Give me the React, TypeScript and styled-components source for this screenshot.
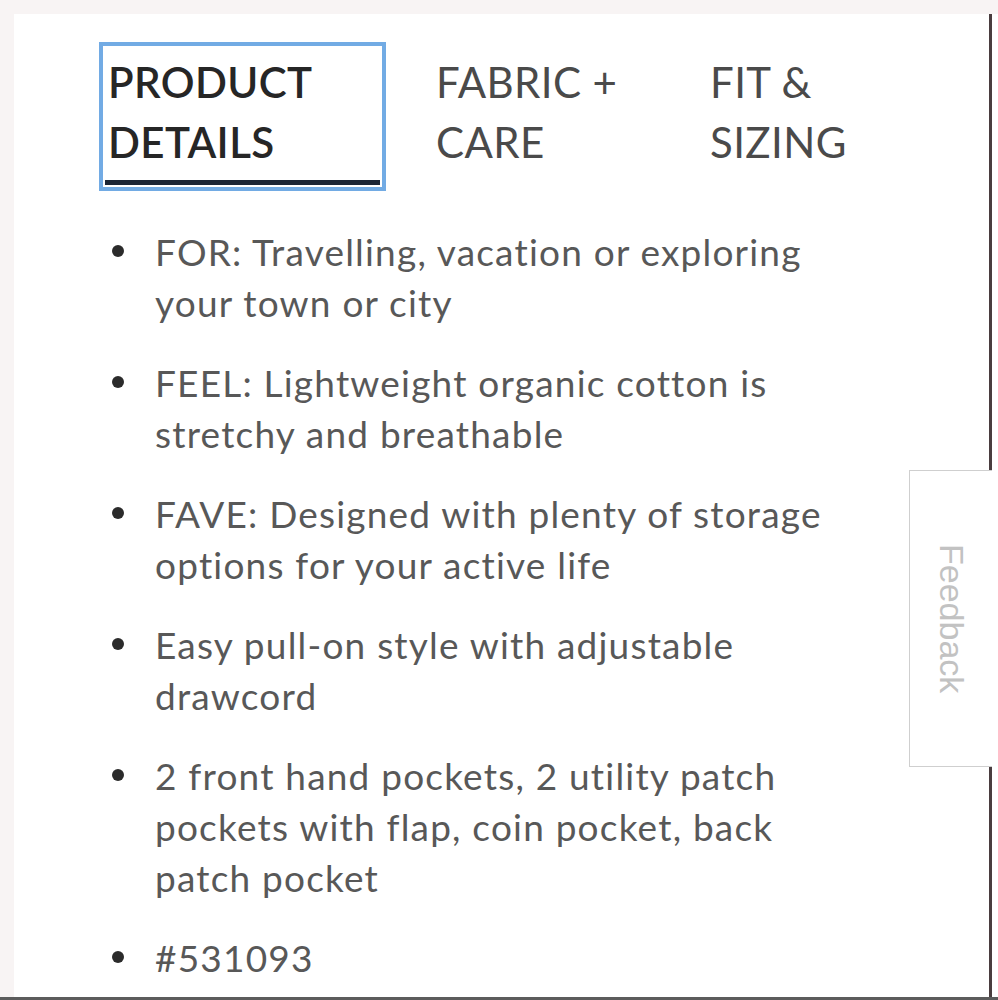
import React from 'react';
import styled, { createGlobalStyle } from 'styled-components';

const GlobalStyle = createGlobalStyle`
  html, body {
    margin: 0;
    padding: 0;
    background: #f8f4f4;
  }
  * {
    box-sizing: border-box;
  }
`;

const Page = styled.div`
  width: 998px;
  height: 1000px;
  display: flex;
  flex-direction: column;
  padding-top: 14px;
  overflow: hidden;
  border-bottom: 3px solid #5c5c5c;
`;

const Frame = styled.div`
  flex: 1;
  display: flex;
  padding-left: 14px;
`;

const Panel = styled.section`
  position: relative;
  flex: 1;
  background: #ffffff;
  border-right: 3px solid #4a3d3f;
  padding: 34px 0 0 91px;
  font-family: Lato, 'Noto Sans', sans-serif;
`;

const RightEdge = styled.div`
  width: 6px;
  background: #ffffff;
`;

const TabBar = styled.div`
  display: grid;
  grid-template-columns: 275px 221px auto;
  column-gap: 53px;
  align-items: start;
`;

const Tab = styled.button<{ $active?: boolean }>`
  appearance: none;
  background: transparent;
  border: none;
  border-bottom: 5px solid ${(p) => (p.$active ? '#1b2535' : 'transparent')};
  outline: ${(p) => (p.$active ? '4px solid #72abe4' : 'none')};
  outline-offset: 2px;
  padding: 4px 0 8px 3px;
  margin: 0;
  text-align: left;
  font-family: inherit;
  font-size: 42px;
  line-height: 60px;
  letter-spacing: 0.4px;
  font-weight: ${(p) => (p.$active ? 600 : 400)};
  color: ${(p) => (p.$active ? '#262626' : '#4a4a4a')};
  text-transform: uppercase;
  cursor: pointer;
`;

const List = styled.ul`
  list-style: none;
  margin: 41px 0 0 0;
  padding: 0;
  display: flex;
  flex-direction: column;
  gap: 29px;
`;

const Item = styled.li`
  position: relative;
  padding-left: 50px;
  width: 740px;
  font-size: 37px;
  line-height: 51px;
  letter-spacing: 1.2px;
  color: #585858;

  &::before {
    content: '';
    position: absolute;
    left: 7px;
    top: 19px;
    width: 12px;
    height: 12px;
    border-radius: 50%;
    background: #2b2b2b;
  }
`;

const FeedbackTab = styled.div`
  position: absolute;
  right: -3px;
  top: 456px;
  width: 83px;
  height: 297px;
  border: 1.5px solid #cfcfcf;
  border-right: none;
  background: #ffffff;
  display: flex;
  align-items: center;
  justify-content: center;
  font-family: 'Liberation Sans', Arial, sans-serif;
  font-size: 34px;
  color: #c2c2c2;
  writing-mode: vertical-rl;
`;

const tabs = [
  { id: 'details', label: ['Product', 'Details'] },
  { id: 'fabric', label: ['Fabric +', 'Care'] },
  { id: 'fit', label: ['Fit &', 'Sizing'] },
];

const details = [
  'FOR: Travelling, vacation or exploring your town or city',
  'FEEL: Lightweight organic cotton is stretchy and breathable',
  'FAVE: Designed with plenty of storage options for your active life',
  'Easy pull-on style with adjustable drawcord',
  '2 front hand pockets, 2 utility patch pockets with flap, coin pocket, back patch pocket',
  '#531093',
];

const App: React.FC = () => {
  const [active, setActive] = React.useState('details');

  return (
    <>
      <GlobalStyle />
      <Page>
        <Frame>
          <Panel>
            <TabBar>
              {tabs.map((tab) => (
                <Tab key={tab.id} $active={tab.id === active} onClick={() => setActive(tab.id)}>
                  {tab.label[0]}
                  <br />
                  {tab.label[1]}
                </Tab>
              ))}
            </TabBar>
            <List>
              {details.map((line) => (
                <Item key={line}>{line}</Item>
              ))}
            </List>
            <FeedbackTab>Feedback</FeedbackTab>
          </Panel>
          <RightEdge />
        </Frame>
      </Page>
    </>
  );
};

export default App;
